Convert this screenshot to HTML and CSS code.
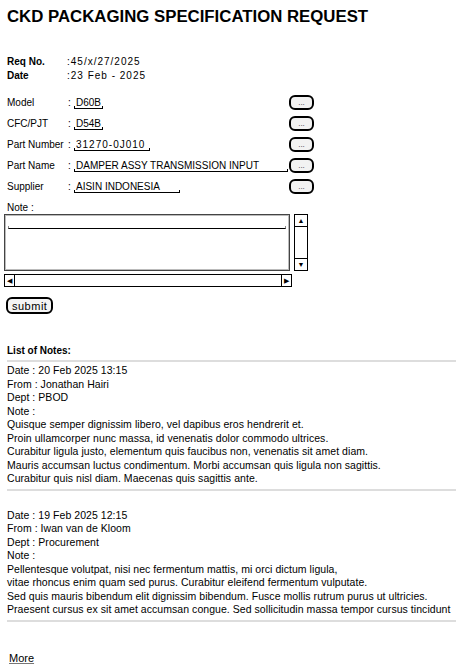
FILE: index.html
```html
<!DOCTYPE html>
<html lang="en">
<head>
  <meta charset="UTF-8">
  <title>CKD Packaging Specification Request</title>
  <link rel="stylesheet" href="styles.css">
</head>
<body>
  <h1 class="title">CKD PACKAGING SPECIFICATION REQUEST</h1>

  <div class="meta">
    <div class="meta-row"><span class="meta-label">Req No.</span><span class="meta-value">:45/x/27/2025</span></div>
    <div class="meta-row"><span class="meta-label">Date</span><span class="meta-value">:23 Feb - 2025</span></div>
  </div>

  <form class="spec-form">
    <div class="row">
      <span class="label">Model</span><span class="colon">:</span>
      <div class="cell"><span class="field">D60B</span></div>
      <button type="button" class="pick">...</button>
    </div>
    <div class="row">
      <span class="label">CFC/PJT</span><span class="colon">:</span>
      <div class="cell"><span class="field">D54B</span></div>
      <button type="button" class="pick">...</button>
    </div>
    <div class="row">
      <span class="label">Part Number</span><span class="colon">:</span>
      <div class="cell"><span class="field spaced">31270-0J010</span></div>
      <button type="button" class="pick">...</button>
    </div>
    <div class="row">
      <span class="label">Part Name</span><span class="colon">:</span>
      <div class="cell"><span class="field full">DAMPER ASSY TRANSMISSION INPUT</span></div>
      <button type="button" class="pick">...</button>
    </div>
    <div class="row">
      <span class="label">Supplier</span><span class="colon">:</span>
      <div class="cell"><span class="field supplier">AISIN INDONESIA</span></div>
      <button type="button" class="pick">...</button>
    </div>

    <div class="note-label">Note :</div>
    <div class="note-box">
      <div class="note-area"><div class="note-line"></div></div>
      <div class="vscroll">
        <span class="arrow up">&#9650;</span>
        <span class="track"></span>
        <span class="arrow down">&#9660;</span>
      </div>
      <div class="hscroll">
        <span class="arrow left">&#9664;</span>
        <span class="track"></span>
        <span class="arrow right">&#9654;</span>
      </div>
    </div>

    <button type="button" class="submit">submit</button>
  </form>

  <h2 class="list-title">List of Notes:</h2>
  <div class="notes">
    <div class="note">
      <p>Date : 20 Feb 2025 13:15</p>
      <p>From : Jonathan Hairi</p>
      <p>Dept : PBOD</p>
      <p>Note :</p>
      <p>Quisque semper dignissim libero, vel dapibus eros hendrerit et.</p>
      <p>Proin ullamcorper nunc massa, id venenatis dolor commodo ultrices.</p>
      <p>Curabitur ligula justo, elementum quis faucibus non, venenatis sit amet diam.</p>
      <p>Mauris accumsan luctus condimentum. Morbi accumsan quis ligula non sagittis.</p>
      <p>Curabitur quis nisl diam. Maecenas quis sagittis ante.</p>
    </div>
    <div class="note">
      <p>Date : 19 Feb 2025 12:15</p>
      <p>From : Iwan van de Kloom</p>
      <p>Dept : Procurement</p>
      <p>Note :</p>
      <p>Pellentesque volutpat, nisi nec fermentum mattis, mi orci dictum ligula,</p>
      <p>vitae rhoncus enim quam sed purus. Curabitur eleifend fermentum vulputate.</p>
      <p>Sed quis mauris bibendum elit dignissim bibendum. Fusce mollis rutrum purus ut ultricies.</p>
      <p>Praesent cursus ex sit amet accumsan congue. Sed sollicitudin massa tempor cursus tincidunt</p>
    </div>
  </div>

  <a class="more" href="#">More</a>
</body>
</html>
```

FILE: styles.css
```css
* {
  margin: 0;
  padding: 0;
  box-sizing: border-box;
}
body {
  font-family: "Liberation Sans", Arial, sans-serif;
  font-size: 10px;
  color: #000;
  background: #fff;
  padding: 7px 6px 0 7px;
}
.title {
  font-size: 16.8px;
  font-weight: bold;
  line-height: 20px;
}
.meta {
  margin-top: 28px;
}
.meta-row {
  display: flex;
  height: 14px;
  line-height: 14px;
}
.meta-label {
  width: 60px;
  font-weight: bold;
}
.meta-value {
  letter-spacing: 1px;
}

.spec-form {
  margin-top: 9px;
}
.row {
  display: flex;
  align-items: center;
  height: 21px;
  width: 307px;
}
.label {
  width: 61px;
}
.colon {
  width: 6px;
}
.cell {
  flex: 1;
}
.field {
  display: inline-block;
  position: relative;
  line-height: 11px;
  padding: 0 2px;
  border-bottom: 1px solid #000;
}
.field::before,
.field::after {
  content: '';
  position: absolute;
  bottom: -1px;
  width: 1px;
  height: 3px;
  background: #000;
}
.field::before { left: 0; }
.field::after { right: 0; }
.field.spaced {
  letter-spacing: 1px;
  padding-right: 5px;
}
.field.full {
  width: 214px;
}
.field.supplier {
  width: 106px;
}
.pick {
  width: 25px;
  height: 15px;
  border: 2px solid #000;
  border-radius: 6px;
  background: #f2f2f2;
  font-family: inherit;
  font-size: 8px;
  line-height: 10px;
  padding-top: 1px;
  color: #333;
}

.note-label {
  margin-top: 4px;
  line-height: 13px;
}
.note-box {
  display: grid;
  grid-template-columns: 286px 18px;
  grid-template-rows: 57px 13px;
  row-gap: 3px;
  column-gap: 4px;
  margin-left: -3px;
}
.note-area {
  border: 1px solid #444;
  box-shadow: inset 0 0 0 1px #bbb;
  padding: 11px 3px 0;
}
.note-line {
  height: 3px;
  border-bottom: 1px solid #000;
  border-left: 1px solid #888;
  border-right: 1px solid #888;
}
.vscroll,
.hscroll {
  display: flex;
  border: 1px solid #000;
  background: #fff;
}
.vscroll {
  flex-direction: column;
  width: 14px;
}
.hscroll {
  width: 288px;
}
.track {
  flex: 1;
}
.arrow {
  font-size: 7px;
  display: flex;
  align-items: center;
  justify-content: center;
  color: #000;
}
.vscroll .arrow {
  height: 12px;
}
.up { border-bottom: 1px solid #000; }
.down { border-top: 1px solid #000; }
.hscroll .arrow {
  width: 10px;
}
.left { border-right: 1px solid #000; }
.right { border-left: 1px solid #000; }

.submit {
  display: block;
  margin-top: 10px;
  margin-left: -1px;
  padding: 0 4px;
  height: 17px;
  border: 2px solid #000;
  border-radius: 6px;
  background: #f4f4f4;
  font-family: inherit;
  font-size: 11px;
  letter-spacing: 0.5px;
}

.list-title {
  margin-top: 30px;
  font-size: 10px;
  font-weight: bold;
  line-height: 14px;
}
.notes {
  border-top: 2px solid #ddd;
  margin-top: 2px;
}
.note {
  padding: 2px 0 3px;
  border-bottom: 2px solid #ddd;
  margin-bottom: 16px;
}
.note p {
  font-size: 10.5px;
  line-height: 13.5px;
  white-space: nowrap;
  letter-spacing: 0.05px;
}
.more {
  display: inline-block;
  margin-top: 14px;
  margin-left: 2px;
  font-size: 11px;
  color: #000;
  text-decoration-color: #777;
}
```
